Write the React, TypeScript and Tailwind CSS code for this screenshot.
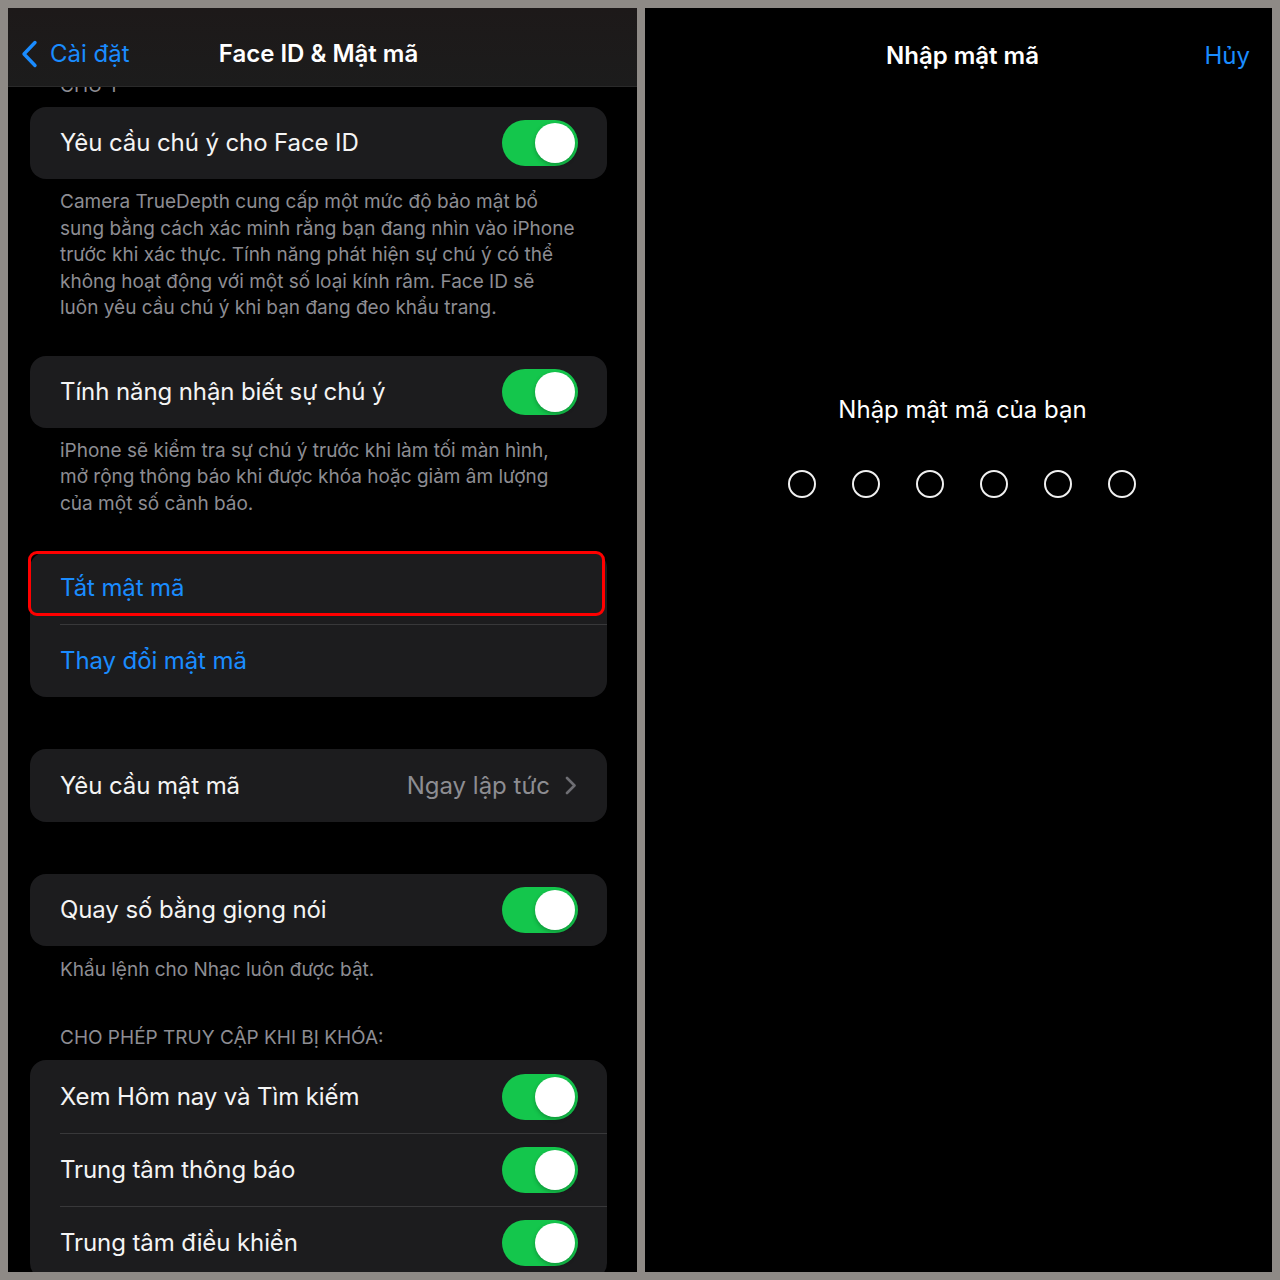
import React from "react";

const font = { fontFamily: "Inter, 'Noto Sans', sans-serif" };

function Toggle() {
  return (
    <div className="w-[76px] h-[46px] rounded-full bg-[#14c64c] relative shrink-0">
      <div className="absolute right-[3px] top-[3px] w-[40px] h-[40px] rounded-full bg-white shadow-[0_2px_4px_rgba(0,0,0,0.25)]" />
    </div>
  );
}

function Row({ label, toggle, blue, value, sep, tall }: { label: string; toggle?: boolean; blue?: boolean; value?: string; sep?: boolean; tall?: boolean }) {
  return (
    <div className={`relative ${tall ? "h-[73px]" : "h-[72px]"} flex items-center pl-[30px] pr-[29px]`}>
      {sep && <div className="absolute top-0 left-[30px] right-0 h-px bg-[#38383a]" />}
      <span className={`flex-1 text-[24px] leading-[30px] tracking-[-0.1px] ${blue ? "text-[#1a8cff]" : "text-[#f4f4f4]"}`}>{label}</span>
      {toggle && <Toggle />}
      {value && (
        <div className="flex items-center gap-[15px] text-[#8d8d92] text-[24px] leading-[30px] pr-[2px]">
          <span>{value}</span>
          <svg width="11" height="19" viewBox="0 0 11 19" fill="none">
            <path d="M2 2l7.5 7.5L2 17" stroke="#6e6e73" strokeWidth="2.6" strokeLinecap="round" strokeLinejoin="round" />
          </svg>
        </div>
      )}
    </div>
  );
}

function Card({ children, className = "" }: { children: React.ReactNode; className?: string }) {
  return <div className={`ml-[22px] mr-[30px] rounded-[16px] bg-[#1c1c1e] shrink-0 ${className}`}>{children}</div>;
}

function Footer({ children, className = "" }: { children: React.ReactNode; className?: string }) {
  return <div className={`pl-[52px] pr-[60px] text-[19px] leading-[26.5px] text-[#8d8d93] shrink-0 ${className}`}>{children}</div>;
}

export default function App() {
  return (
    <div className="w-[1280px] h-[1280px] bg-[#8e8a86] p-[8px] flex gap-[8px]" style={font}>
      {/* Left panel */}
      <div className="w-[629px] h-[1264px] bg-black flex flex-col overflow-hidden">
        <div className="h-[79px] shrink-0 bg-gradient-to-b from-[#1d1919] to-[#1c1c1c] border-b border-[#2a2a2a] relative flex items-end pb-[16px]">
          <div className="flex items-center pl-[12px] gap-[12px] text-[#1a8cff]">
            <svg width="18" height="28" viewBox="0 0 18 28" fill="none">
              <path d="M15 2.5L4 14l11 11.5" stroke="#1a8cff" strokeWidth="3.4" strokeLinecap="round" strokeLinejoin="round" />
            </svg>
            <span className="text-[24px] leading-[32px]">Cài đặt</span>
          </div>
          <div className="absolute left-0 right-0 bottom-[16px] text-center pr-[8px]">
            <span className="text-[24px] leading-[32px] font-semibold text-white">Face ID &amp; Mật mã</span>
          </div>
        </div>
        <div className="flex-1 overflow-hidden flex flex-col">
          <div className="h-[20px] shrink-0 overflow-hidden">
            <div className="mt-[-14px] px-[52px] text-[19px] leading-[26px] text-[#8d8d93]">CHÚ Ý</div>
          </div>
          <Card>
            <Row label="Yêu cầu chú ý cho Face ID" toggle />
          </Card>
          <Footer className="pt-[10px] pb-[34px]">
            Camera TrueDepth cung cấp một mức độ bảo mật bổ sung bằng cách xác minh rằng bạn đang nhìn vào iPhone trước khi xác thực. Tính năng phát hiện sự chú ý có thể không hoạt động với một số loại kính râm. Face ID sẽ luôn yêu cầu chú ý khi bạn đang đeo khẩu trang.
          </Footer>
          <Card>
            <Row label="Tính năng nhận biết sự chú ý" toggle />
          </Card>
          <Footer className="pt-[10px] pb-[35px]">
            iPhone sẽ kiểm tra sự chú ý trước khi làm tối màn hình, mở rộng thông báo khi được khóa hoặc giảm âm lượng của một số cảnh báo.
          </Footer>
          <Card className="relative">
            <Row label="Tắt mật mã" blue />
            <Row label="Thay đổi mật mã" blue sep tall />
            <div className="absolute left-[-2px] top-[-1px] w-[577px] h-[65px] border-[3px] border-[#f00] rounded-[9px]" />
          </Card>
          <div className="h-[52px] shrink-0" />
          <Card>
            <Row label="Yêu cầu mật mã" value="Ngay lập tức" tall />
          </Card>
          <div className="h-[52px] shrink-0" />
          <Card>
            <Row label="Quay số bằng giọng nói" toggle />
          </Card>
          <Footer className="pt-[11px] pb-[41px]">Khẩu lệnh cho Nhạc luôn được bật.</Footer>
          <Footer className="pb-[9px] uppercase">Cho phép truy cập khi bị khóa:</Footer>
          <Card>
            <Row label="Xem Hôm nay và Tìm kiếm" toggle tall />
            <Row label="Trung tâm thông báo" toggle sep tall />
            <Row label="Trung tâm điều khiển" toggle sep tall />
          </Card>
        </div>
      </div>
      {/* Right panel */}
      <div className="flex-1 h-[1264px] bg-black flex flex-col items-center relative pl-[6px]">
        <div className="w-full h-[96px] relative flex justify-center pt-[32px] pl-[2px]">
          <span className="text-[24px] leading-[32px] font-semibold text-white">Nhập mật mã</span>
          <span className="absolute right-[22px] top-[32px] text-[24px] leading-[32px] text-[#1a8cff]">Hủy</span>
        </div>
        <div className="mt-[290px] text-[24px] leading-[32px] text-white pl-[2px]">Nhập mật mã của bạn</div>
        <div className="mt-[44px] flex gap-[36px]">
          {[0, 1, 2, 3, 4, 5].map((i) => (
            <div key={i} className="w-[28px] h-[28px] rounded-full border-2 border-[#f0f0f0]" />
          ))}
        </div>
      </div>
    </div>
  );
}
